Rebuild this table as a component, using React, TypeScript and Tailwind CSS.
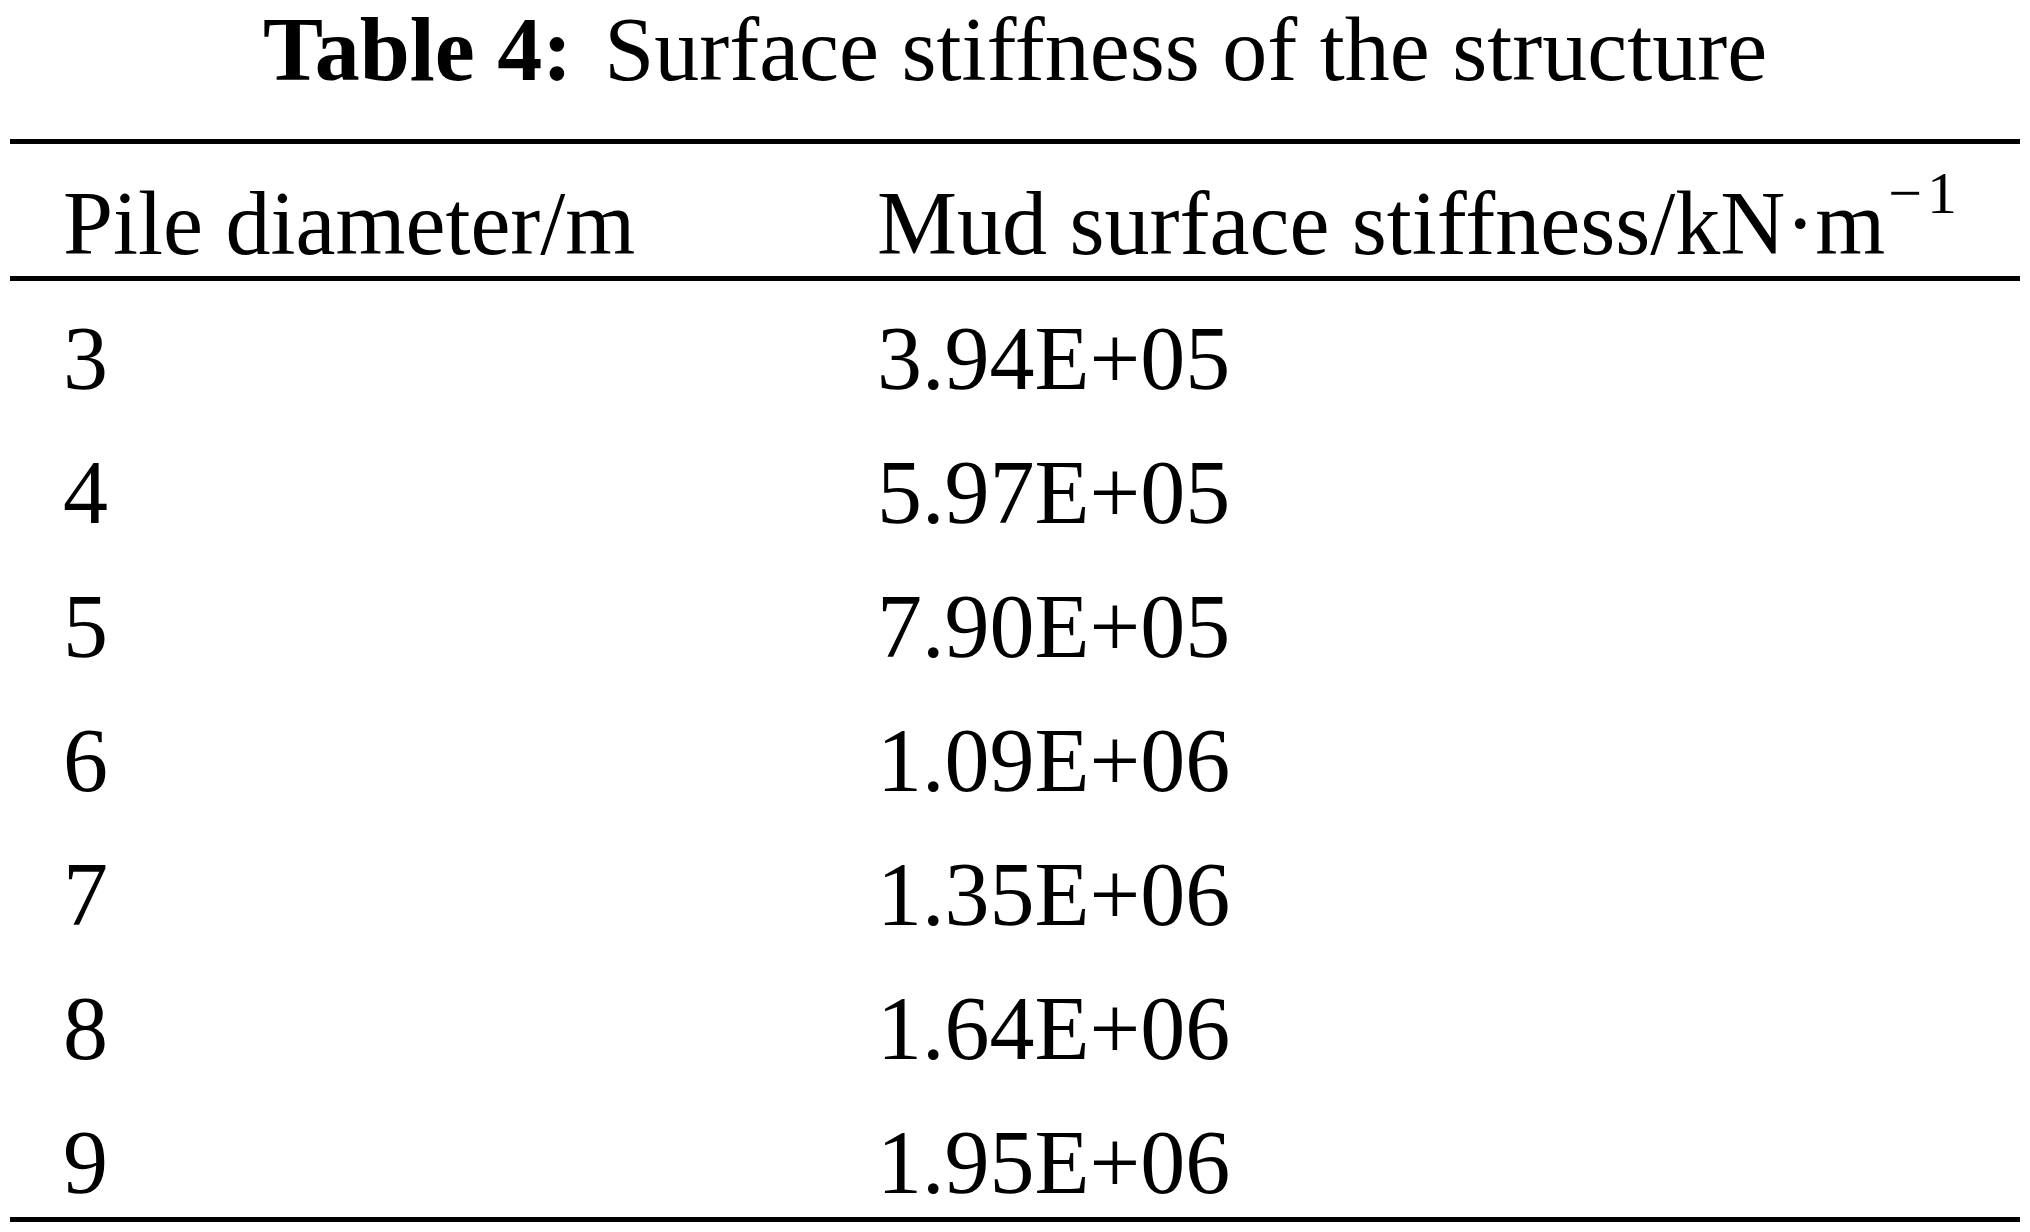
import React from "react";

const rows: [string, string][] = [
  ["3", "3.94E+05"],
  ["4", "5.97E+05"],
  ["5", "7.90E+05"],
  ["6", "1.09E+06"],
  ["7", "1.35E+06"],
  ["8", "1.64E+06"],
  ["9", "1.95E+06"],
];

export default function App() {
  return (
    <div className="w-[2030px] h-[1232px] bg-white text-black font-['Liberation_Serif',serif] px-[10px] overflow-hidden">
      <div className="text-[90px] leading-[100px] text-center whitespace-nowrap mb-[39px]">
        <span className="font-bold">Table 4:</span>
        <span className="ml-[32px]">Surface stiffness of the structure</span>
      </div>
      <div className="h-[5px] bg-black" />
      <div className="grid grid-cols-[814px_1fr] pl-[53px] pt-[35px] pb-[7px] text-[90px] leading-[90px] whitespace-nowrap">
        <div>Pile diameter/m</div>
        <div>
          Mud surface stiffness/kN·m
          <span className="relative -top-[41px] ml-[3px] text-[60px] leading-none">
            <span>−</span>
            <span className="ml-[5px]">1</span>
          </span>
        </div>
      </div>
      <div className="h-[5px] bg-black" />
      <div className="flex flex-col gap-[44px] pl-[53px] pt-[33px] pb-[9px] text-[90px] leading-[90px] whitespace-nowrap">
        {rows.map(([d, s]) => (
          <div key={d} className="grid grid-cols-[814px_1fr]">
            <div>{d}</div>
            <div>{s}</div>
          </div>
        ))}
      </div>
      <div className="h-[5px] bg-black" />
    </div>
  );
}
